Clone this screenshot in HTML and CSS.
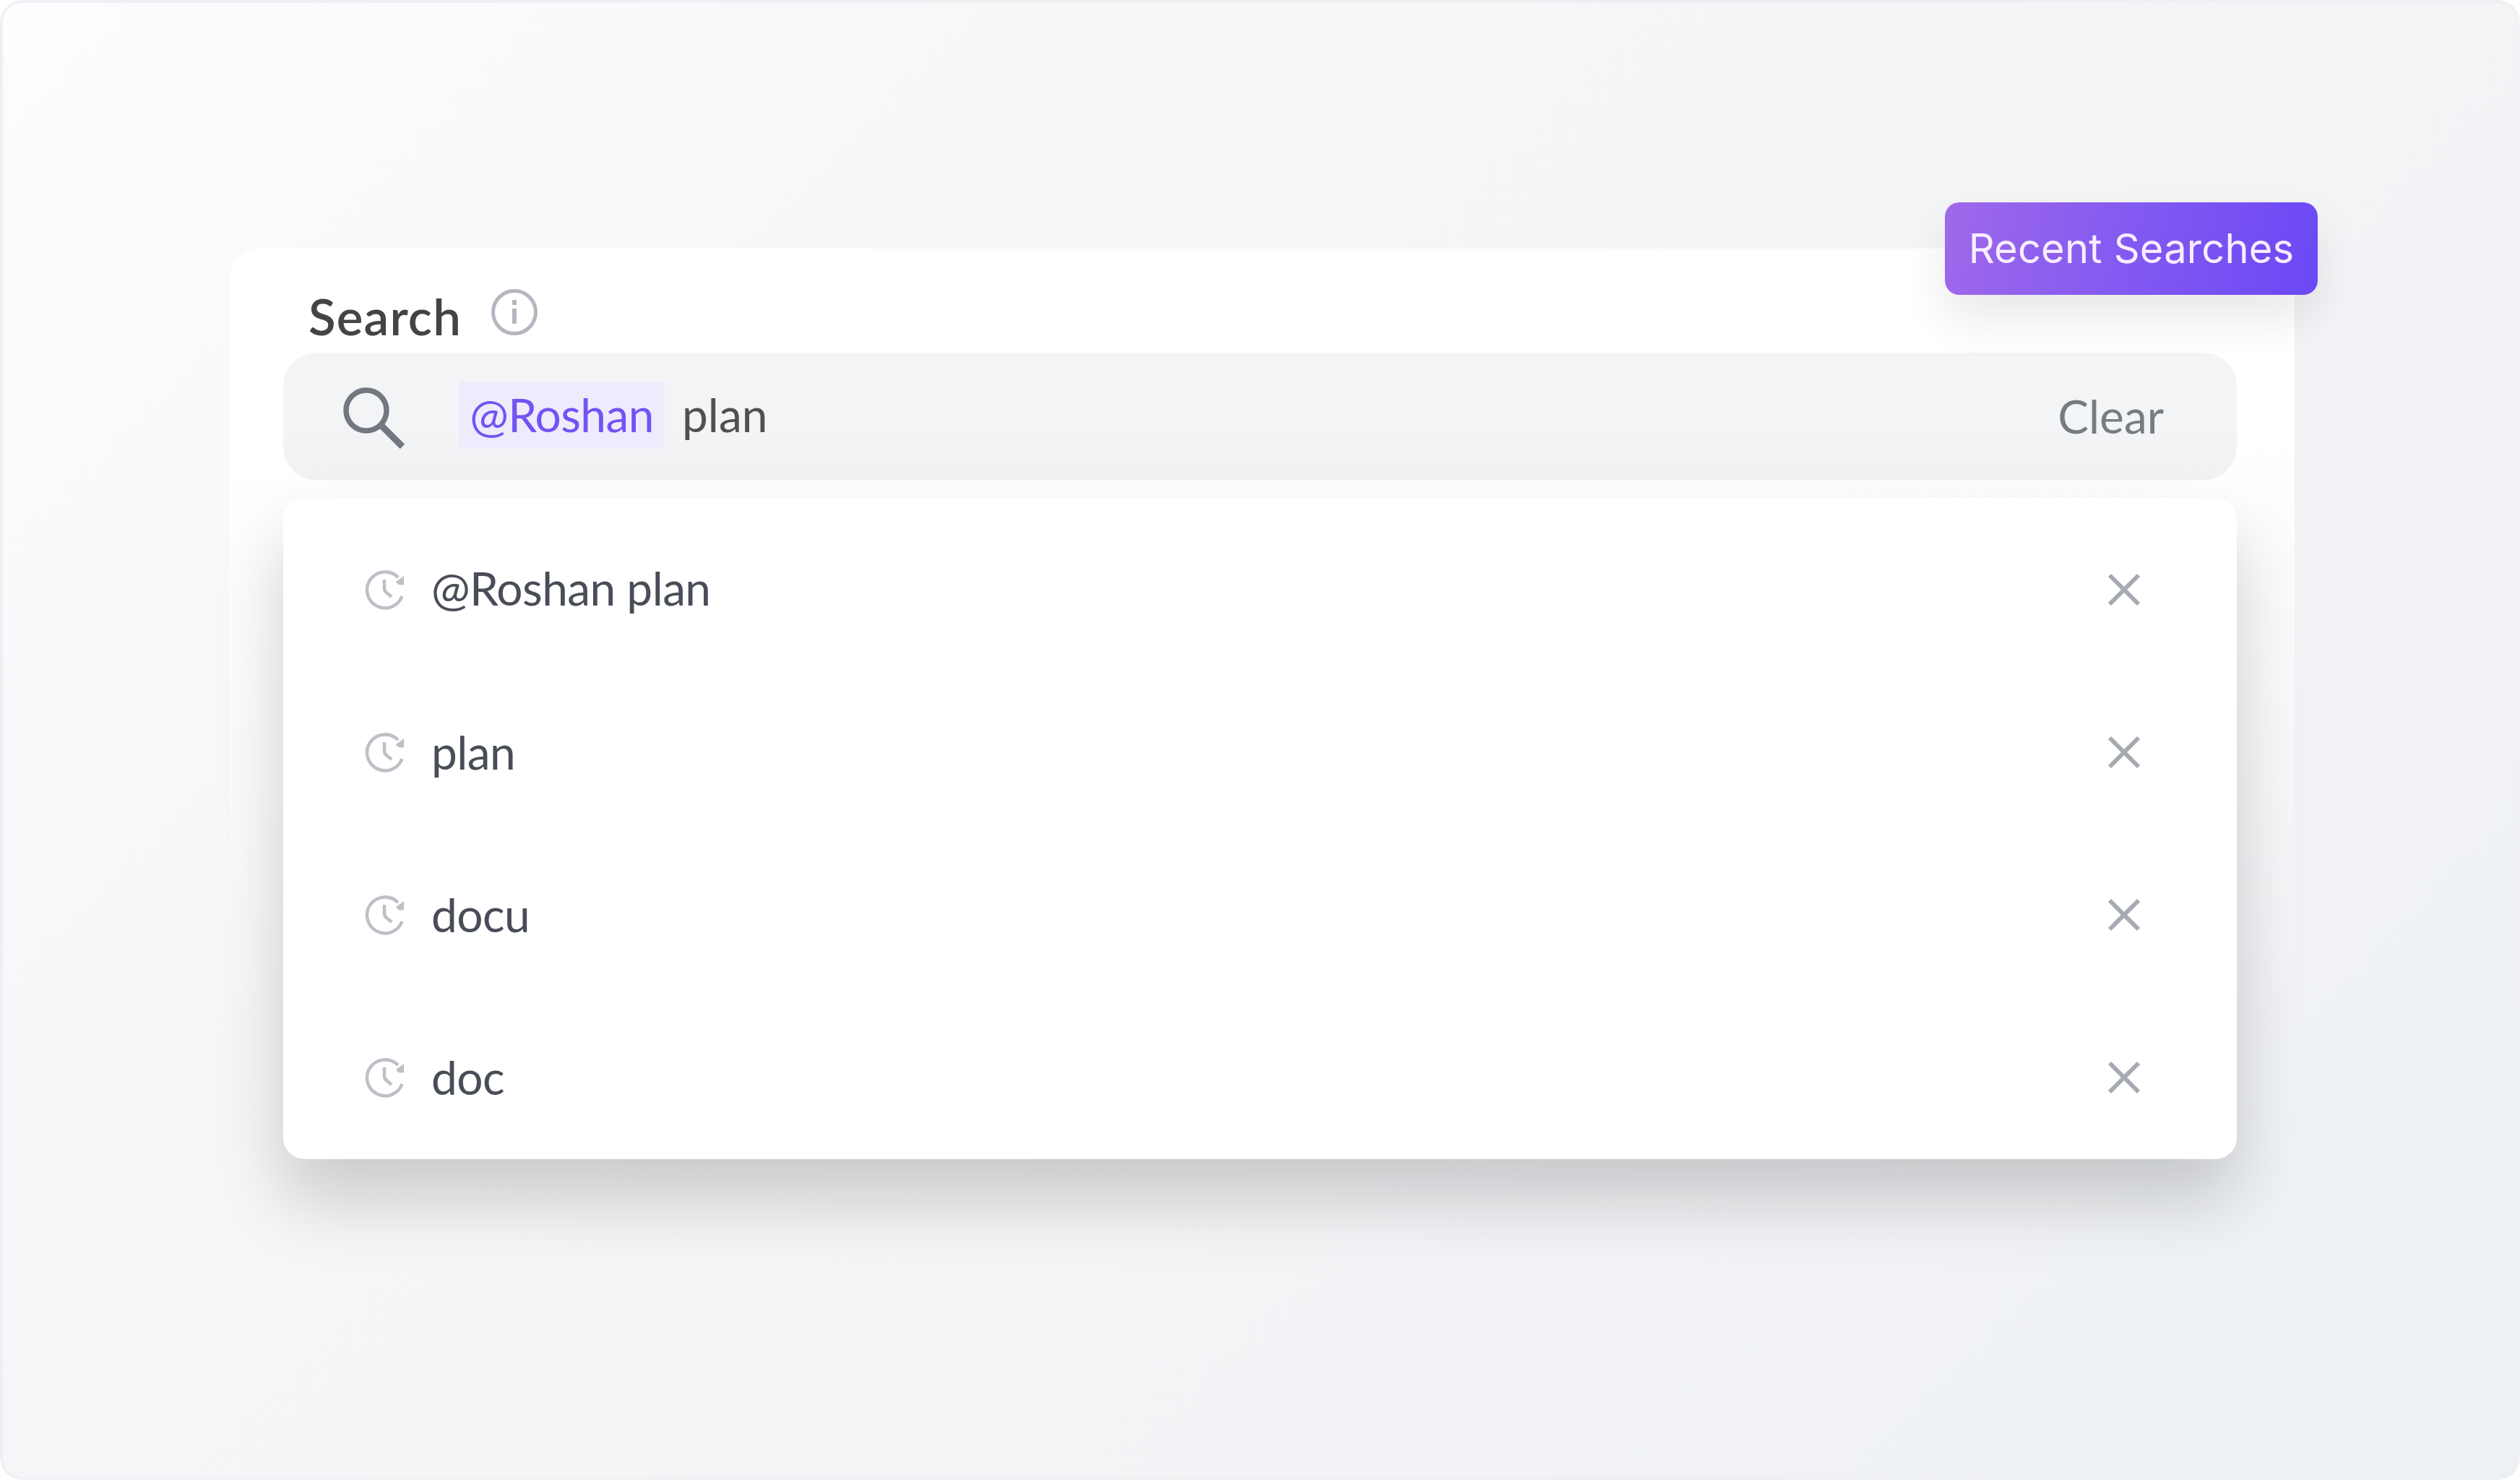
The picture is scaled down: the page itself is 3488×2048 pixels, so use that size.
FILE: index.html
```html
<!DOCTYPE html>
<html lang="en">
<head>
    <meta charset="UTF-8">
    <meta name="viewport" content="width=device-width, initial-scale=1.0">
    <title>Recent Searches</title>
    <link rel="stylesheet" href="styles.css">
</head>
<body>
    <svg width="0" height="0" class="icon-defs">
        <symbol id="icon-recent" viewBox="0 0 56 56">
            <path d="M51.500 37A25 25 0 1 1 46 11" fill="none" stroke="currentColor" stroke-width="4.500"/>
            <path d="M54 9v12q-8 2-11-4z" fill="currentColor"/>
            <path d="M27 14v12q0 4 3 6l7 6" fill="none" stroke="currentColor" stroke-width="4.500"/>
        </symbol>
        <symbol id="icon-close" viewBox="0 0 48 48">
            <path d="M4 4L44 44M44 4L4 44" fill="none" stroke="currentColor" stroke-width="6"/>
        </symbol>
    </svg>
    <div class="page">
        <div class="card">
            <div class="badge">Recent Searches</div>
            <div class="heading">
                <span class="title">Search</span>
                <svg class="info-icon" viewBox="0 0 66 66">
                    <circle cx="33" cy="33" r="29.500" fill="none" stroke="currentColor" stroke-width="5"/>
                    <path d="M33 16v7M33 28v21" fill="none" stroke="currentColor" stroke-width="6"/>
                </svg>
            </div>
            <div class="search-bar">
                <svg class="search-icon" viewBox="0 0 86 86">
                    <circle cx="32" cy="33" r="28" fill="none" stroke="currentColor" stroke-width="7.500"/>
                    <path d="M52 53L82 83" fill="none" stroke="currentColor" stroke-width="9"/>
                </svg>
                <span class="mention">@Roshan</span>
                <span class="query">plan</span>
                <span class="clear">Clear</span>
            </div>
            <div class="results">
                <div class="row">
                    <svg class="recent-icon"><use href="#icon-recent"/></svg>
                    <span class="label">@Roshan plan</span>
                    <svg class="close-icon"><use href="#icon-close"/></svg>
                </div>
                <div class="row">
                    <svg class="recent-icon"><use href="#icon-recent"/></svg>
                    <span class="label">plan</span>
                    <svg class="close-icon"><use href="#icon-close"/></svg>
                </div>
                <div class="row">
                    <svg class="recent-icon"><use href="#icon-recent"/></svg>
                    <span class="label">docu</span>
                    <svg class="close-icon"><use href="#icon-close"/></svg>
                </div>
                <div class="row">
                    <svg class="recent-icon"><use href="#icon-recent"/></svg>
                    <span class="label">doc</span>
                    <svg class="close-icon"><use href="#icon-close"/></svg>
                </div>
            </div>
        </div>
    </div>
</body>
</html>
```
FILE: styles.css
```css
* {
    box-sizing: border-box;
}
body {
    margin: 0;
    background-color: #fff;
    font-family: Lato, "Liberation Sans", sans-serif;
}
.icon-defs {
    display: block;
    position: absolute;
}
.page {
    width: 3488px;
    height: 2048px;
    padding: 340px 308px 0 313px;
    border: 4px solid rgba(236, 238, 241, 0.7);
    border-radius: 32px;
    background: linear-gradient(135deg, #fcfdfe 0%, #f6f7f9 30%, #f3f4f6 62%, #edf0f4 100%);
    background-clip: border-box;
    overflow: hidden;
}
.card {
    position: relative;
    height: 1400px;
    padding: 0 80px 0 75px;
    border-radius: 44px;
    background: linear-gradient(180deg, #fff 0, #fff 250px, rgba(255, 255, 255, 0) 1080px);
}
.badge {
    position: absolute;
    top: -64px;
    right: -32px;
    width: 516px;
    height: 128px;
    border-radius: 20px;
    background: linear-gradient(100deg, #9f69ea 0%, #8259f1 50%, #6b48f5 100%);
    box-shadow: 0 32px 64px rgba(0, 0, 0, 0.09);
    color: #f8eeff;
    font-family: Inter, sans-serif;
    font-size: 56px;
    line-height: 128px;
    letter-spacing: 0.2px;
    text-align: center;
    white-space: nowrap;
}
.heading {
    display: flex;
    height: 144px;
    padding-left: 35px;
}
.title {
    width: 254px;
    padding-top: 50px;
    color: #444;
    font-size: 69px;
    font-weight: 600;
    line-height: 88px;
    letter-spacing: 1.2px;
}
.info-icon {
    width: 66px;
    height: 66px;
    margin-top: 55px;
    margin-left: -2px;
    color: #b4b7bf;
}
.search-bar {
    display: flex;
    align-items: center;
    height: 176px;
    padding: 0 101px 0 83px;
    border-radius: 46px;
    background: linear-gradient(180deg, #f3f4f6 60%, #f0f1f2 100%);
    font-size: 64px;
    line-height: 92px;
}
.search-icon {
    width: 86px;
    height: 86px;
    margin-top: 4px;
    color: #737780;
}
.mention {
    width: 285px;
    height: 93px;
    margin-left: 74px;
    margin-top: -4px;
    background-color: #eeebfd;
    color: #7353f3;
    letter-spacing: -0.6px;
    text-align: center;
}
.query {
    margin-left: 24px;
    margin-top: -5px;
    color: #505050;
}
.clear {
    margin-left: auto;
    color: #777b83;
}
.results {
    height: 916px;
    margin-top: 24px;
    padding: 15px 132px 0 113px;
    border-radius: 30px;
    background-color: #fff;
    box-shadow: 0 56px 96px rgba(0, 0, 0, 0.18);
}
.row {
    display: flex;
    align-items: center;
    height: 225px;
}
.recent-icon {
    width: 56px;
    height: 56px;
    color: #bec0c8;
}
.label {
    margin-left: 36px;
    color: #484d58;
    font-size: 64px;
    line-height: 90px;
    letter-spacing: -0.6px;
}
.row:first-child .label {
    margin-top: -3px;
}
.close-icon {
    width: 48px;
    height: 48px;
    margin-left: auto;
    color: #a6aab2;
}
```
